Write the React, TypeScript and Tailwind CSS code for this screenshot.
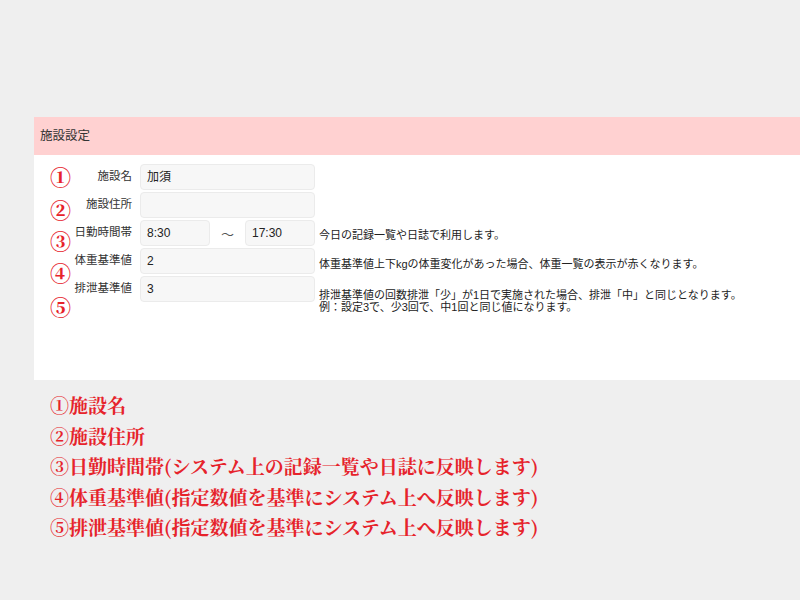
import React from "react";

const sans = { fontFamily: '"Liberation Sans", "Noto Sans CJK JP", sans-serif' };
const serif = { fontFamily: '"Noto Serif CJK JP", "Liberation Serif", "Noto Sans CJK JP", serif' };

function Input({ value, w }: { value: string; w: string }) {
  return (
    <div
      className={`${w} h-[26px] shrink-0 rounded-[4px] border border-[#ebebeb] bg-[#f7f7f7] px-[6px] flex items-center text-[12px] text-[#222]`}
    >
      {value}
    </div>
  );
}

function Row({
  label,
  children,
  help,
  helpClass,
}: {
  label: string;
  children: React.ReactNode;
  help?: React.ReactNode;
  helpClass?: string;
}) {
  return (
    <div className="flex items-start h-[26px] mb-[2px]">
      <div className="w-[98px] shrink-0 h-[26px] flex items-center justify-end text-[11.5px] text-[#333]">
        {label}
      </div>
      <div className="ml-[8px] flex items-center">{children}</div>
      {help && (
        <div className={`ml-[4px] text-[11px] leading-[12px] text-[#222] ${helpClass ?? ""}`}>{help}</div>
      )}
    </div>
  );
}

export default function App() {
  const circles = [
    { n: "①", top: "top-[166px]" },
    { n: "②", top: "top-[199px]" },
    { n: "③", top: "top-[230px]" },
    { n: "④", top: "top-[262px]" },
    { n: "⑤", top: "top-[296px]" },
  ];
  return (
    <div className="relative w-[800px] h-[600px] bg-[#efefef] overflow-hidden" style={sans}>
      <div className="pt-[117px] pl-[34px]">
        <div className="w-[766px] h-[263px] bg-white">
          <div className="h-[38px] bg-[#ffd1d1] px-[6px] flex items-center text-[12.5px] text-[#333]">施設設定</div>
          <div className="pt-[9px]">
            <Row label="施設名">
              <Input value="加須" w="w-[175px]" />
            </Row>
            <Row label="施設住所">
              <Input value="" w="w-[175px]" />
            </Row>
            <Row label="日勤時間帯" help="今日の記録一覧や日誌で利用します。" helpClass="mt-[9px]">
              <Input value="8:30" w="w-[70px]" />
              <div className="w-[35px] text-center text-[13px] text-[#555] pt-[4px]">～</div>
              <Input value="17:30" w="w-[70px]" />
            </Row>
            <Row
              label="体重基準値"
              help="体重基準値上下kgの体重変化があった場合、体重一覧の表示が赤くなります。"
              helpClass="mt-[10px]"
            >
              <Input value="2" w="w-[175px]" />
            </Row>
            <Row
              label="排泄基準値"
              help={
                <>
                  排泄基準値の回数排泄「少」が1日で実施された場合、排泄「中」と同じとなります。
                  <br />
                  例：設定3で、少3回で、中1回と同じ値になります。
                </>
              }
              helpClass="mt-[13px] leading-[11px]"
            >
              <Input value="3" w="w-[175px]" />
            </Row>
          </div>
        </div>
      </div>
      <div className="pt-[10px] pl-[50px] text-[19px] leading-[30.5px] font-bold text-[#e6232b]" style={serif}>
        <div>①施設名</div>
        <div>②施設住所</div>
        <div>③日勤時間帯(システム上の記録一覧や日誌に反映します)</div>
        <div>④体重基準値(指定数値を基準にシステム上へ反映します)</div>
        <div>⑤排泄基準値(指定数値を基準にシステム上へ反映します)</div>
      </div>
      {circles.map((c) => (
        <div
          key={c.n}
          className={`absolute left-[50px] ${c.top} text-[21px] leading-[21px] font-black text-[#e6232b]`}
          style={serif}
        >
          {c.n}
        </div>
      ))}
    </div>
  );
}
